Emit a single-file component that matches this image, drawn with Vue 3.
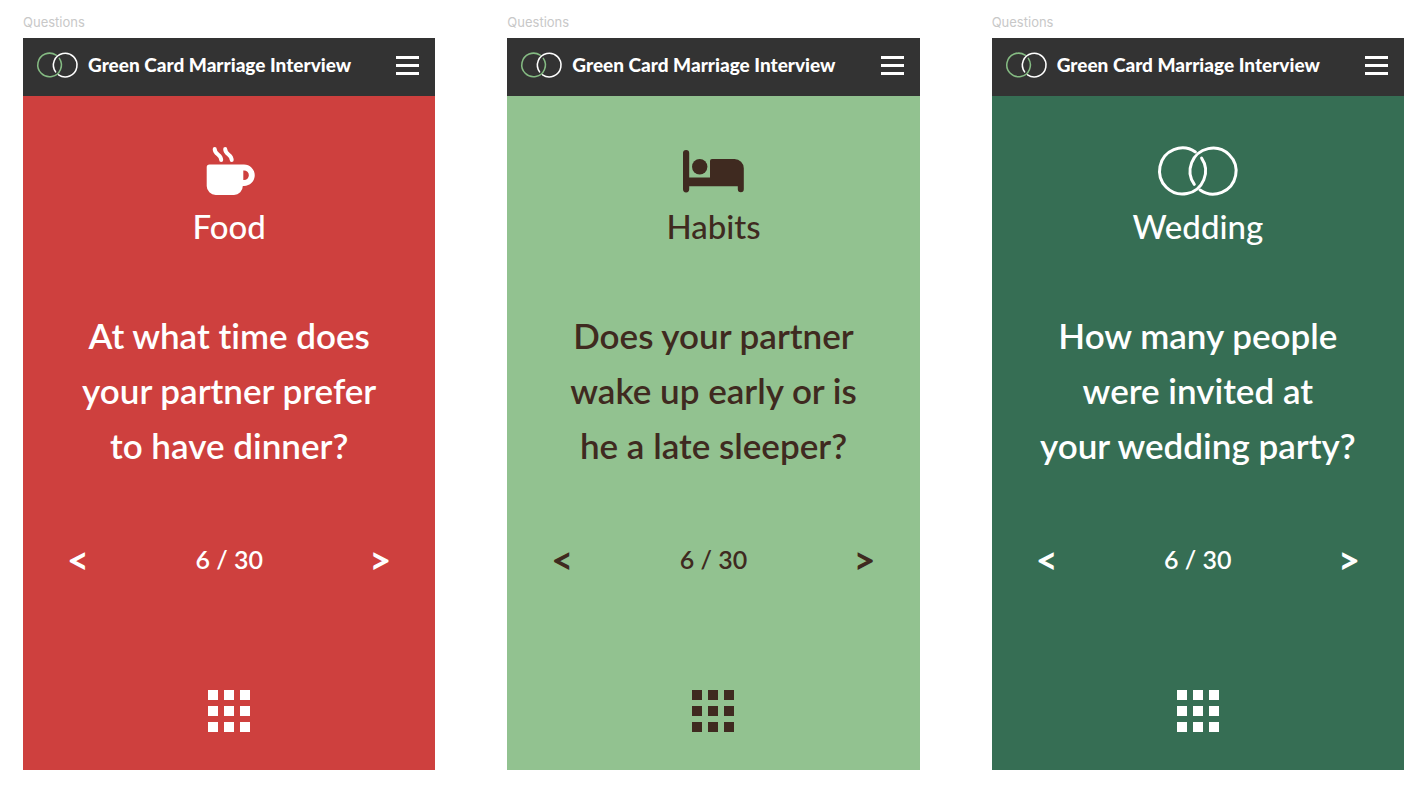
<script setup>
const screens = [
  { theme: 'food', title: 'Food', question: 'At what time does\nyour partner prefer\nto have dinner?' },
  { theme: 'habits', title: 'Habits', question: 'Does your partner\nwake up early or is\nhe a late sleeper?' },
  { theme: 'wedding', title: 'Wedding', question: 'How many people\nwere invited at\nyour wedding party?' },
]
</script>

<template>
  <main class="board">
    <section v-for="s in screens" :key="s.theme" class="frame">
      <p class="label">Questions</p>
      <article class="card" :class="s.theme">
        <header class="topbar">
          <svg class="logo" viewBox="0 0 80 50" aria-hidden="true">
            <path class="ring-green" d="M43.6 12.1A23 23 0 1 1 37.4 5.9" />
            <path class="ring-white" d="M36.3 38.4A23 23 0 1 1 42.1 44.1" />
          </svg>
          <span class="brand">Green Card Marriage Interview</span>
          <button class="menu" type="button" aria-label="Menu">
            <span></span><span></span><span></span>
          </button>
        </header>
        <div class="content">
          <svg v-if="s.theme === 'food'" class="icon" width="50" height="50" viewBox="-2 0 50 50" aria-hidden="true">
            <path
              fill="currentColor"
              fill-rule="evenodd"
              d="M3.5 18.500H38a10.700 10.700 0 0 1 0 21.500h-1.200a9 9 0 0 1-8.800 9H9.700a9 9 0 0 1-9-9V21.300A2.800 2.800 0 0 1 3.500 18.500ZM37.300 24.400v9.700H38a4.850 4.850 0 0 0 0-9.700Z"
            />
            <g class="steam">
              <path d="M8.700 3c0 6 6.500 5 6.500 11" />
              <path d="M19.200 3c0 6 6.500 5 6.500 11" />
            </g>
          </svg>
          <svg v-else-if="s.theme === 'habits'" class="icon" width="61" height="50" viewBox="0 -4 61 50" aria-hidden="true">
            <g fill="currentColor">
              <path d="M0 3a3.100 3.100 0 0 1 6.200 0v24.500H27V11a2 2 0 0 1 2-2h22.500a9.300 9.300 0 0 1 9.300 9.300v21a3 3 0 0 1-6 0v-3H6.200v3a3.100 3.100 0 0 1-6.200 0Z" />
              <circle cx="16.700" cy="16.700" r="7.700" />
            </g>
          </svg>
          <svg v-else class="icon" width="80" height="50" viewBox="0 0 80 50" aria-hidden="true">
            <path class="ring-white" d="M43.6 12.1A23 23 0 1 1 37.4 5.9" />
            <path class="ring-white" d="M36.3 38.4A23 23 0 1 1 42.1 44.1" />
          </svg>
          <h1 class="title">{{ s.title }}</h1>
          <p class="question">{{ s.question }}</p>
          <nav class="pager" aria-label="Questions">
            <button class="arrow" type="button" aria-label="Previous question">&lt;</button>
            <span class="count">6 / 30</span>
            <button class="arrow" type="button" aria-label="Next question">&gt;</button>
          </nav>
          <button class="tiles" type="button" aria-label="All categories">
            <span v-for="n in 9" :key="n"></span>
          </button>
        </div>
      </article>
    </section>
  </main>
</template>

<style>
body {
  margin: 0;
  background: #fff;
}
</style>

<style scoped>
.board {
  display: grid;
  grid-template-columns: repeat(3, minmax(0, 1fr));
  gap: 72px;
  padding: 12px 23px 16px;
}
.label {
  margin: 0 0 6px;
  font: 400 13px/20px Inter, sans-serif;
  color: #c8c8c8;
}
.card {
  color: #fff;
  font-family: Lato, sans-serif;
  font-variant-ligatures: none;
}
.food {
  background: #ce403e;
}
.habits {
  background: #92c290;
}
.wedding {
  background: #366e54;
}
.topbar {
  display: flex;
  align-items: center;
  height: 58px;
  box-sizing: border-box;
  padding: 0 16px 4px 14px;
  background: #333;
  color: #fff;
}
.logo {
  flex: none;
  width: 41px;
  height: 26px;
  margin-right: 10px;
  overflow: visible;
}
.ring-green,
.ring-white {
  fill: none;
  stroke: #fff;
  stroke-width: 3;
  stroke-linecap: round;
}
.ring-green {
  stroke: #85bb83;
}
.brand {
  font-size: 19px;
  line-height: 24px;
  font-weight: 900;
  white-space: nowrap;
}
button {
  padding: 0;
  border: 0;
  background: none;
  color: inherit;
  cursor: pointer;
}
.menu {
  display: grid;
  gap: 5px;
  width: 23px;
  margin-left: auto;
}
.menu span {
  height: 3px;
  background: #fff;
}
.content {
  display: flex;
  flex-direction: column;
  align-items: center;
  padding: 50px 44px 38px;
}
.habits .content {
  color: #3f2a20;
}
.icon {
  display: block;
  overflow: visible;
}
.steam {
  fill: none;
  stroke: currentColor;
  stroke-width: 4;
  stroke-linecap: round;
}
.title {
  margin: 10px 0 0;
  font-size: 33px;
  line-height: 40px;
  font-weight: 500;
}
.question {
  margin: 62px 0 0;
  font-size: 35px;
  line-height: 55px;
  font-weight: 600;
  text-align: center;
  white-space: pre;
}
.pager {
  display: flex;
  align-items: center;
  justify-content: space-between;
  align-self: stretch;
  margin-top: 66px;
}
.arrow {
  font: 700 38px/40px Lato, sans-serif;
}
.count {
  font-size: 25px;
  line-height: 40px;
  font-weight: 600;
}
.tiles {
  display: grid;
  grid-template-columns: repeat(3, 10px);
  gap: 6px;
  margin-top: 111px;
}
.tiles span {
  height: 10px;
  background: currentColor;
}
</style>
